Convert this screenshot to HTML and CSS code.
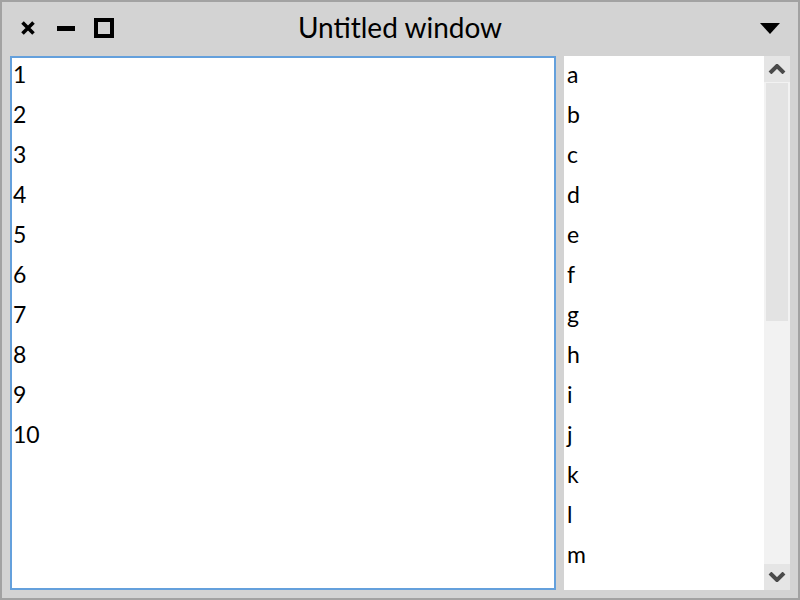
FILE: index.html
```html
<!DOCTYPE html>
<html>
<head>
<meta charset="utf-8">
<link rel="stylesheet" href="styles.css">
</head>
<body>
<div class="window">
  <div class="titlebar">
    <div class="controls">
      <svg class="ic-close" width="14" height="14" viewBox="0 0 14 14"><path d="M1.5 1.5 L12.5 12.5 M12.5 1.5 L1.5 12.5" stroke="#000" stroke-width="3.6" fill="none"/></svg>
      <span class="ic-min"></span>
      <span class="ic-max"></span>
    </div>
    <div class="title">Untitled window</div>
    <div class="menu">
      <svg width="20" height="11" viewBox="0 0 20 11"><path d="M0 0 L20 0 L10 11 Z" fill="#000"/></svg>
    </div>
  </div>
  <div class="content">
    <div class="list focused">
      <div class="item">1</div>
      <div class="item">2</div>
      <div class="item">3</div>
      <div class="item">4</div>
      <div class="item">5</div>
      <div class="item">6</div>
      <div class="item">7</div>
      <div class="item">8</div>
      <div class="item">9</div>
      <div class="item">10</div>
    </div>
    <div class="side">
      <div class="list plain">
        <div class="item">a</div>
        <div class="item">b</div>
        <div class="item">c</div>
        <div class="item">d</div>
        <div class="item">e</div>
        <div class="item">f</div>
        <div class="item">g</div>
        <div class="item">h</div>
        <div class="item">i</div>
        <div class="item">j</div>
        <div class="item">k</div>
        <div class="item">l</div>
        <div class="item">m</div>
        <div class="item">n</div>
        <div class="item">o</div>
      </div>
      <div class="scrollbar">
        <div class="sb-btn">
          <svg width="18" height="10" viewBox="0 0 18 10"><polyline points="2,9 9,2 16,9" stroke="#4a4a4a" stroke-width="4" fill="none"/></svg>
        </div>
        <div class="sb-track">
          <div class="sb-thumb"></div>
        </div>
        <div class="sb-btn">
          <svg width="18" height="10" viewBox="0 0 18 10"><polyline points="2,1 9,8 16,1" stroke="#4a4a4a" stroke-width="4" fill="none"/></svg>
        </div>
      </div>
    </div>
  </div>
</div>
</body>
</html>
```

FILE: styles.css
```css
html, body {
  margin: 0;
  padding: 0;
}
body {
  font-family: "Lato", "Liberation Sans", sans-serif;
  color: #000;
}
.window {
  width: 800px;
  height: 600px;
  box-sizing: border-box;
  border: 2px solid #a2a2a2;
  background: #d3d3d3;
  display: flex;
  flex-direction: column;
  overflow: hidden;
}
.titlebar {
  height: 54px;
  flex: none;
  display: grid;
  grid-template-columns: 1fr auto 1fr;
  align-items: center;
}
.controls {
  display: flex;
  align-items: center;
  padding-left: 19px;
  height: 100%;
}
.ic-close {
  display: block;
  margin-top: -2px;
}
.ic-min {
  display: block;
  width: 18px;
  height: 5px;
  background: #000;
  margin-left: 22px;
  margin-top: -1px;
}
.ic-max {
  display: block;
  width: 20px;
  height: 20px;
  box-sizing: border-box;
  border: 4px solid #000;
  margin-left: 19px;
  margin-top: -2px;
}
.title {
  font-size: 28px;
  line-height: 50px;
  margin-bottom: 4px;
  text-align: center;
  white-space: nowrap;
}
.menu {
  display: flex;
  justify-content: flex-end;
  padding-right: 18px;
  margin-top: -2px;
}
.menu svg {
  display: block;
}
.content {
  flex: 1;
  display: flex;
  gap: 8px;
  padding: 0 8px 8px 8px;
  min-height: 0;
}
.list {
  background: #fff;
  overflow: hidden;
  font-size: 23px;
}
.list.focused {
  width: 546px;
  box-sizing: border-box;
  border: 2px solid #64a0dc;
  padding-left: 1px;
}
.list.plain {
  width: 200px;
  padding-top: 2px;
  padding-left: 3px;
  box-sizing: border-box;
}
.item {
  height: 40px;
  line-height: 32px;
}
.side {
  display: flex;
  width: 226px;
}
.scrollbar {
  width: 26px;
  display: flex;
  flex-direction: column;
  background: #f2f2f2;
}
.sb-btn {
  height: 26px;
  flex: none;
  background: #e5e5e5;
  display: flex;
  align-items: center;
  justify-content: center;
}
.sb-btn svg {
  display: block;
}
.sb-track {
  flex: 1;
  padding: 1px 2px;
}
.sb-thumb {
  height: 238px;
  background: #e3e3e3;
}
```
